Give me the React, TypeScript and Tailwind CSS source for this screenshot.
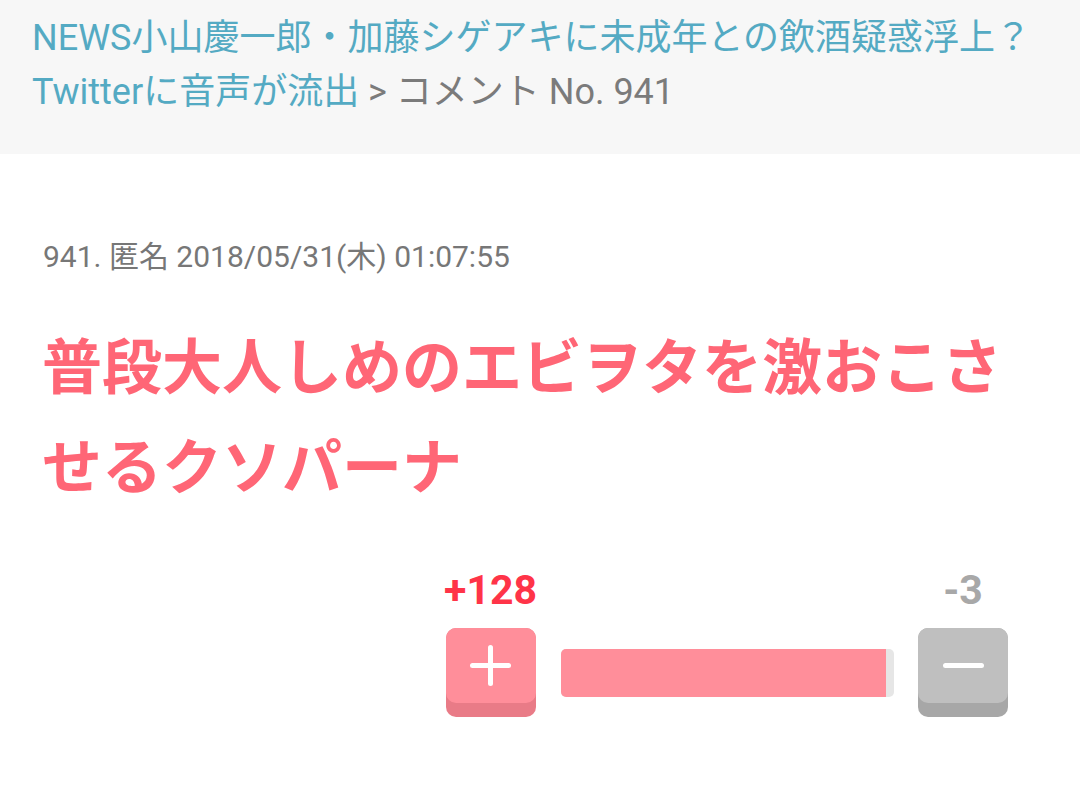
function VoteButton({ kind }: { kind: 'plus' | 'minus' }) {
  const isPlus = kind === 'plus'
  return (
    <div className={`w-[90px] h-[89px] rounded-[10px] ${isPlus ? 'bg-[#e97b87]' : 'bg-[#a7a7a7]'}`}>
      <div className={`relative h-[75px] rounded-[10px] flex items-center justify-center ${isPlus ? 'bg-[#ff8e9a]' : 'bg-[#bfbfbf]'}`}>
        <span className="block w-[41px] h-[5px] rounded-full bg-white" />
        {isPlus && <span className="absolute w-[5px] h-[41px] rounded-full bg-white" />}
      </div>
    </div>
  )
}

export default function App() {
  return (
    <div className="min-h-[791px] bg-white font-['Roboto','Noto_Sans_CJK_JP',sans-serif]">
      <div className="bg-[#f7f7f7] pl-[32px] pr-[20px] pt-[11px] pb-[35px] text-[36px] leading-[54px] text-[#54aac3]">
        <span>NEWS小山慶一郎・加藤シゲアキに未成年との飲酒疑惑浮上？<br />Twitterに音声が流出</span>
        <span className="text-[#7b7b7b]"> &gt; コメント No. 941</span>
      </div>

      <div className="px-[43px] pt-[85px]">
        <div className="text-[30px] leading-[36px] text-[#777777]">941. 匿名 2018/05/31(木) 01:07:55</div>
        <p className="mt-[44px] -ml-[1px] text-[60px] leading-[100px] font-bold text-[#ff6676]">
          普段大人しめのエビヲタを激おこさせるクソパーナ
        </p>
      </div>

      <div className="flex justify-end pr-[72px] mt-[47px]">
        <div className="flex items-end">
          <div className="flex flex-col items-center">
            <div className="text-[41px] leading-[48px] font-bold text-[#ff3448]">+128</div>
            <div className="mt-[14px]">
              <VoteButton kind="plus" />
            </div>
          </div>
          <div className="mx-[24px] mb-[20px] w-[333px] h-[48px] rounded-[5px] bg-[#e6e6e6] overflow-hidden">
            <div className="h-full bg-[#ff8e9a]" style={{ width: `${(128 / 131) * 100}%` }} />
          </div>
          <div className="flex flex-col items-center">
            <div className="text-[41px] leading-[48px] font-bold text-[#a8a8a8]">-3</div>
            <div className="mt-[14px]">
              <VoteButton kind="minus" />
            </div>
          </div>
        </div>
      </div>
    </div>
  )
}
